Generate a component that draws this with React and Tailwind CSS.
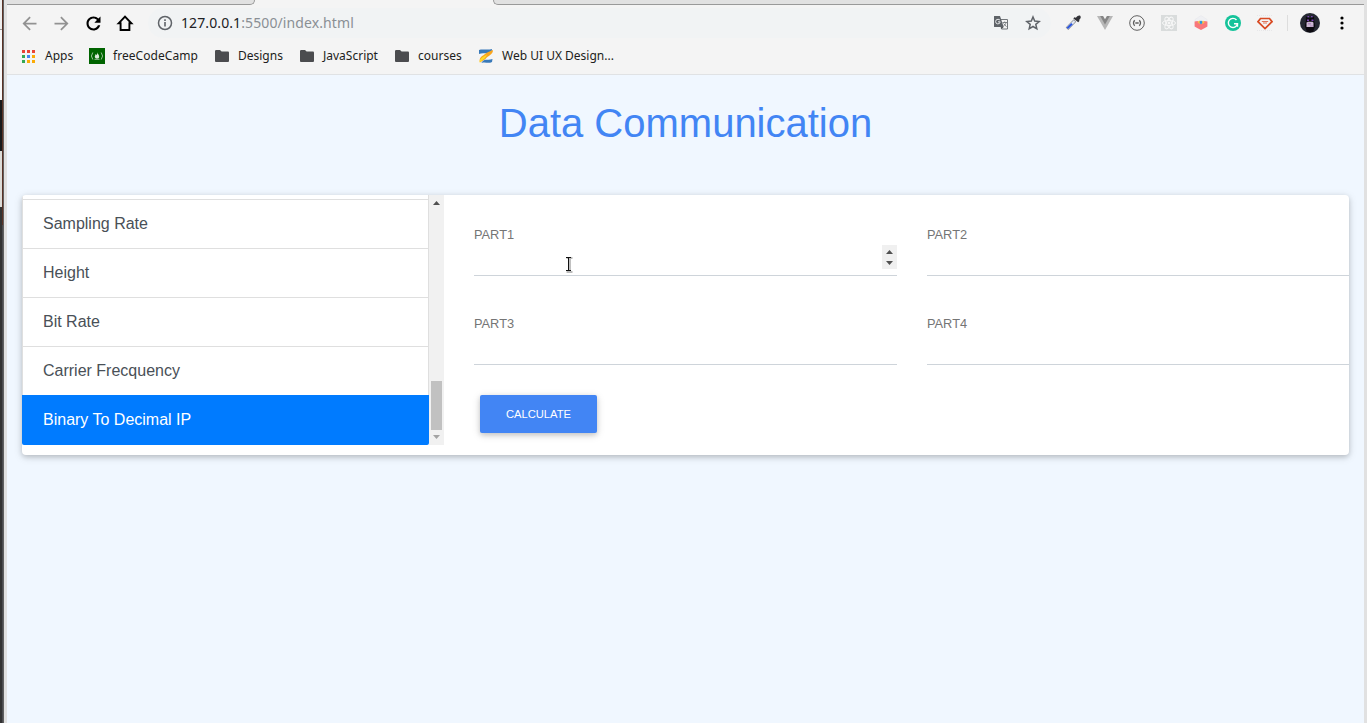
import React from 'react';

const ARROW = 'M20 11H7.83l5.59-5.59L12 4l-8 8 8 8 1.41-1.41L7.83 13H20v-2z';

function Glyph({ d, className, size = 21 }) {
  return (
    <svg width={size} height={size} viewBox="0 0 24 24" className={className} fill="currentColor">
      <path d={d} />
    </svg>
  );
}

function Slot({ children }) {
  return <div className="flex w-8 shrink-0 items-center justify-center">{children}</div>;
}

function Folder() {
  return (
    <svg width="14" height="12" viewBox="0 0 14 12" className="fill-[#4b4c4f]">
      <path d="M1.2 0H5l1.6 1.5h6.2c.7 0 1.2.5 1.2 1.2v8c0 .7-.5 1.3-1.2 1.3H1.2C.5 12 0 11.400 0 10.700V1.300C0 .6.5 0 1.200 0z" />
    </svg>
  );
}

function Toolbar() {
  return (
    <div className="flex h-9 items-center pl-1.5">
      <Slot><Glyph d={ARROW} className="text-[#929292]" /></Slot>
      <Slot><Glyph d={ARROW} className="rotate-180 text-[#929292]" /></Slot>
      <Slot>
        <Glyph className="text-black" d="M17.65 6.35C16.2 4.9 14.21 4 12 4c-4.420 0-7.990 3.580-7.990 8s3.570 8 7.990 8c3.730 0 6.840-2.550 7.730-6h-2.650c-.82 2.330-3.040 3.600-5.080 3.600-3.100 0-5.600-2.500-5.600-5.600s2.500-5.600 5.600-5.600c1.550 0 2.930.64 3.940 1.660L13 11h7V4l-2.350 2.350z" />
      </Slot>
      <Slot>
        <svg width="18" height="18" viewBox="0 0 18 18" fill="none" stroke="#000" strokeWidth="1.900">
          <path d="M2.600 9.300 9 2.700l6.400 6.600h-2V16H4.600V9.300z" />
        </svg>
      </Slot>
      <div className="ml-[7px] flex h-[30px] w-[903px] items-center rounded-full bg-[#f1f3f4] pl-[9px] pr-0.5">
        <svg width="16" height="16" viewBox="0 0 16 16" fill="none" stroke="#5f6368" strokeWidth="1.500">
          <circle cx="8" cy="8" r="6.500" />
          <path d="M8 7v4.500M8 4.300v1.600" strokeWidth="1.600" />
        </svg>
        <span className="ml-2 grow whitespace-nowrap text-[14px] leading-5 tracking-[0.1px] text-[#8a8f94]">
          <span className="text-[#202124]">127.0.0.1</span>:5500/index.html
        </span>
        <Slot>
          <svg width="16" height="16" viewBox="0 0 16 16">
            <path d="M7 4.500h7.500V14H8.500z" fill="#f4f4f4" stroke="#73777b" />
            <path d="M1.500 1H7l3.700 11H1.500C1 12 1 11.500 1 11V2c0-.5 0-1 .5-1z" fill="#5f6368" />
            <path d="M7 5.200C6.500 4.500 5.800 4.300 5 4.300a2.300 2.300 0 1 0 2.200 2.500H5" fill="none" stroke="#e4e6e8" />
            <path d="M9.500 7.500H14M11.700 6.500v1M13 7.500c-.3 1.600-1.300 2.800-2.500 3.500M10.500 8.500l3 3.200" fill="none" stroke="#73777b" strokeWidth=".9" />
            <path d="m8.500 14 2.200-2H8z" fill="#4b4f53" />
          </svg>
        </Slot>
        <Slot>
          <svg width="16" height="16" viewBox="0 0 16 16" fill="none" stroke="#5f6368" strokeWidth="1.500">
            <path d="m8 2 1.700 4.100 4.500.4-3.400 2.900 1 4.400L8 11.500l-3.800 2.300 1-4.400-3.400-2.900 4.500-.4z" />
          </svg>
        </Slot>
      </div>
      <div className="ml-1.5 flex">
        <Slot>
          <svg width="16" height="16" viewBox="0 0 16 16">
            <path d="m10 5.500-8 8.300" stroke="#8b8d92" strokeWidth="3.600" />
            <path d="m9.500 6-7 7.200" stroke="#dfe6f5" strokeWidth="2.200" />
            <path d="m7 8.800-4.700 4.600" stroke="#2a56e0" strokeWidth="2" />
            <path d="m8.500 3.200 1-1 1.400.5C12.500.8 14 0 15.200.800c1 1.200.5 2.700-1 3.900l.2 1.300-1.200 1.300-4.800-3.700z" fill="#333338" />
          </svg>
        </Slot>
        <Slot>
          <svg width="16" height="14" viewBox="0 0 16 14">
            <path d="M0 0h16L8 14z" fill="#b7b7b7" />
            <path d="M3.200 0h9.600L8 8.500z" fill="#858585" />
            <path d="M6.100 0h3.800L8 3.200z" fill="#f4f4f4" />
          </svg>
        </Slot>
        <Slot>
          <svg width="16" height="16" viewBox="0 0 16 16" fill="none" stroke="#606060">
            <circle cx="8" cy="8" r="7.300" strokeWidth="1" />
            <path d="M5.700 5.300Q3.300 8 5.700 10.700M10.300 5.300q2.400 2.700 0 5.400M6.300 8h3.400" strokeWidth="1.300" />
          </svg>
        </Slot>
        <Slot>
          <svg width="16" height="16" viewBox="0 0 16 16" fill="none" stroke="#f8f8f8" className="bg-[#d9dcdc]">
            <ellipse cx="8" cy="8" rx="6.500" ry="2.600" />
            <ellipse cx="8" cy="8" rx="6.500" ry="2.600" transform="rotate(60 8 8)" />
            <ellipse cx="8" cy="8" rx="6.500" ry="2.600" transform="rotate(120 8 8)" />
            <circle cx="8" cy="8" r="1" fill="#fff" />
          </svg>
        </Slot>
        <Slot>
          <svg width="16" height="16" viewBox="0 0 16 16">
            <path d="m8 .5 6 4v4l-6 6-6-6v-4z" fill="#eff0f3" stroke="#e5e6ea" strokeWidth=".5" />
            <path d="M1.600 6.500 4.500 6 8 9l3.500-3 2.900.5v5l-3 1.700L8 15l-3.400-1.800-3-1.700z" fill="#f8777b" />
            <path d="m4.500 7 2-1.500L8 7.500 6.500 9z" fill="#ffc23d" />
            <path d="m8 7.500 2-2 1.700 1.800L9.700 9z" fill="#ffc23d" />
            <path d="m6.700 6.500 1.300-1 1.300 1v1.700L8 9.300 6.700 8.200z" fill="#2697dd" />
          </svg>
        </Slot>
        <Slot>
          <svg width="16" height="16" viewBox="0 0 16 16" fill="none">
            <circle cx="8" cy="8" r="8" fill="#15c39a" />
            <path d="M11.500 5A4.600 4.600 0 1 0 12.500 8.700H9M12.500 8.700v3" stroke="#fff" strokeWidth="1.400" />
          </svg>
        </Slot>
        <Slot>
          <svg width="16" height="16" viewBox="0 0 16 16" fill="none">
            <path d="M0 .5h16M0 15.500h16" stroke="#e7e7e9" strokeDasharray="1 1" />
            <path d="M3.500 3.500h9L15 6.700 8 13.500 1 6.700z" stroke="#d84a22" strokeWidth="1.700" />
            <path d="M4.800 6.500h6.400M6 8h4" stroke="#df6747" strokeWidth=".9" />
          </svg>
        </Slot>
      </div>
      <div className="ml-1.5 h-4 w-px bg-[#dddddd]" />
      <svg width="20" height="20" viewBox="0 0 20 20" className="ml-3 shrink-0">
        <circle cx="10" cy="10" r="10" fill="#242731" />
        <path d="M6 3.500 8 4.800h4l2-1.300.2 4.500 1 5-2.200 6H7l-2.200-6 1-5z" fill="#0b090f" />
        <path d="M7.500 3h1.600v1.200H7.500zM11 3h1.600v1.200H11zM7 6.500h2V8H7zM11.500 6.500h2V8h-2z" fill="#7a42b5" />
        <path d="M6.500 9.500 8 8.800h4.500l1 1V14h-7z" fill="#cbb7d3" />
        <path d="M8 10h3v1.500H8zM10 12.500h3v1h-3z" fill="#b08fbe" />
      </svg>
      <svg width="4" height="14" viewBox="0 0 4 14" className="ml-5 shrink-0">
        <circle cx="2" cy="2" r="1.600" /><circle cx="2" cy="7" r="1.600" /><circle cx="2" cy="12" r="1.600" />
      </svg>
    </div>
  );
}

function Bookmark({ icon, label, className }) {
  return (
    <div className={'flex shrink-0 items-center whitespace-nowrap ' + className}>
      {icon}
      <span>{label}</span>
    </div>
  );
}

const dots = ['#ea4335', '#ea4335', '#ea4335', '#34a853', '#4285f4', '#fbab05', '#34a853', '#fbab05', '#fbab05'];

function Bookmarks() {
  return (
    <div className="flex h-[33px] items-center pb-[3px] pl-[15px] text-[12px] leading-4 text-[#1c1d20]">
      <Bookmark className="w-[67px] gap-2.5" label="Apps" icon={
        <svg width="13" height="13" viewBox="0 0 13 13">
          {dots.map((c, i) => <rect key={i} x={(i % 3) * 5} y={Math.floor(i / 3) * 5} width="3" height="3" fill={c} />)}
        </svg>
      } />
      <Bookmark className="w-[126px] gap-2 tracking-[0.060px]" label="freeCodeCamp" icon={
        <svg width="16" height="16" viewBox="0 0 16 16" className="bg-[#006400]" fill="none" stroke="#a9c9a9" strokeWidth=".9">
          <path d="M3.800 4.500Q1 8 3.800 11.500M12.200 4.500q2.800 3.500 0 7M5.500 11.300h5" />
          <path d="M8.300 4.200c.2 2 2.200 2.600 1.900 4.800-.2 1-1 1.500-2.200 1.500S5.800 9.700 5.800 8.700c0-1.200.9-1.600.8-2.700.7.3.8.8.8 1.300.8-.7 1-1.900.9-3.100z" fill="#dce9dc" stroke="none" />
        </svg>
      } />
      <Bookmark className="w-[85px] gap-[9px]" label="Designs" icon={<Folder />} />
      <Bookmark className="w-[95px] gap-[9px]" label="JavaScript" icon={<Folder />} />
      <Bookmark className="w-[83px] gap-[9px]" label="courses" icon={<Folder />} />
      <Bookmark className="gap-2" label="Web UI UX Design..." icon={
        <svg width="16" height="16" viewBox="0 0 16 16">
          <path d="M1 2C5 .5 9 2.500 14 1l-.5 3.500C9 6.500 5 4 1 6z" fill="#3979b9" />
          <path d="M15 2C15 7 10 7.500 7.500 11L2 14.500C.5 10 3.500 8.500 7 6c2.500-1.800 4-2.500 8-4z" fill="#f9a51e" />
          <path d="M1.500 14.500C1.500 9.500 6 9 9 6.500 8 10 5 11.500 1.500 14.500z" fill="#ffdc29" />
          <path d="M4 14c3-4 6-1.300 10.500-3L14 14c-4 2-6.500-.5-10.500 1z" fill="#3979b9" />
        </svg>
      } />
    </div>
  );
}

function Field({ label, spinner }) {
  return (
    <div className="flex h-[89px] flex-col">
      <div className="h-[18px] text-[12.8px] leading-[20px] text-[#757575]">{label}</div>
      <div className="flex h-[33px] items-start justify-end border-b border-[#ced4da]">
        {spinner && (
          <svg width="15" height="24" viewBox="0 0 15 24" className="mt-0.5 bg-[#f0f0f0]">
            <path d="M4 9h7L7.500 5zM4 16h7l-3.500 4z" fill="#505050" />
          </svg>
        )}
      </div>
    </div>
  );
}

const items = ['Sampling Rate', 'Height', 'Bit Rate', 'Carrier Frecquency'];

function Menu() {
  return (
    <div className="flex h-[250px] w-[422px] shrink-0">
      <div className="flex w-[407px] flex-col text-[16px] leading-6 text-[#495057]">
        <div className="h-1 shrink-0 border-x border-[#dfdfdf]" />
        {items.map((t) => (
          <div key={t} className="flex h-[49px] shrink-0 items-center border-x border-t border-[#dfdfdf] pl-5">{t}</div>
        ))}
        <div className="flex h-[50px] shrink-0 items-center rounded-b-[2px] bg-[#007bff] pl-[21px] text-white">Binary To Decimal IP</div>
      </div>
      <div className="flex w-[15px] flex-col items-center bg-[#f1f1f1]">
        <svg width="15" height="15" viewBox="0 0 15 15" className="shrink-0"><path d="M4 10h7L7.500 6z" fill="#505050" /></svg>
        <div className="mt-[171px] h-[49px] w-[11px] bg-[#c1c1c1]" />
        <svg width="15" height="15" viewBox="0 0 15 15" className="shrink-0"><path d="M4 5h7L7.500 9z" fill="#a3a3a3" /></svg>
      </div>
    </div>
  );
}

export default function App() {
  return (
    <div className="relative flex h-[723px] w-[1367px] overflow-hidden bg-[#e1e1e1]">
      <div className="flex w-0.5 shrink-0 flex-col">
        <div className="h-[29px] bg-[#eeeeee]" />
        <div className="h-px bg-[#999999]" />
        <div className="h-[70px] bg-[#f8f8f8]" />
        <div className="h-[51px] bg-[#18191b]" />
        <div className="h-[56px] bg-[#dcdcd8]" />
        <div className="grow bg-[#333333]" />
      </div>
      <div className="flex w-px shrink-0 flex-col">
        <div className="h-[225px] bg-[#5a3226]" />
        <div className="grow bg-[#4b4b4f]" />
      </div>
      <div className="w-px shrink-0 bg-[#606060]" />
      <div className="ml-[3px] flex w-[1357px] shrink-0 flex-col bg-[#f0f7ff]">
        <div className="flex h-[75px] shrink-0 flex-col border-b border-[#e0e2e4] bg-[#f4f4f4] font-['Noto_Sans','Open_Sans',sans-serif]">
          <div className="flex h-[5px] shrink-0 justify-between">
            <div className="w-[248px] rounded-br-[5px] border-b border-r border-[#999999] bg-[#e1e1e1]" />
            <div className="w-[871px] rounded-bl-[5px] border-b border-l border-[#999999] bg-[#e1e1e1]" />
          </div>
          <Toolbar />
          <Bookmarks />
        </div>
        <div className="flex flex-col px-[15px] font-['Liberation_Sans',Arial,sans-serif]">
          <h1 className="mt-6 text-center text-[40px] leading-[48px] text-[#4285f4]">Data Communication</h1>
          <div className="mt-12 flex h-[260px] overflow-hidden rounded-[4px] bg-white shadow-[0_2px_5px_0_rgba(0,0,0,0.16),0_2px_10px_0_rgba(0,0,0,0.12)]">
            <Menu />
            <div className="flex grow flex-col pl-[30px] pt-[30px]">
              <div className="grid grid-cols-[423px_422px] gap-x-[30px]">
                <Field label="PART1" spinner />
                <Field label="PART2" />
                <Field label="PART3" />
                <Field label="PART4" />
              </div>
              <button className="-mt-2 ml-1.5 h-[38px] w-[117px] rounded-[2px] bg-[#4285f4] text-[11.2px] text-white shadow-[0_2px_5px_0_rgba(0,0,0,0.16),0_2px_10px_0_rgba(0,0,0,0.12)]">CALCULATE</button>
            </div>
          </div>
        </div>
      </div>
      <svg width="9" height="17" viewBox="0 0 9 17" className="absolute left-[565px] top-[256px]" fill="none">
        <path d="M1.500 2h2.500M5 2h2.500M5 2v13M1.500 16h6" stroke="#bbbbbb" strokeWidth="1.800" />
        <path d="M1 1.500h5M3.500 1.500v13M1 14.500h5" stroke="#111111" />
      </svg>
    </div>
  );
}
